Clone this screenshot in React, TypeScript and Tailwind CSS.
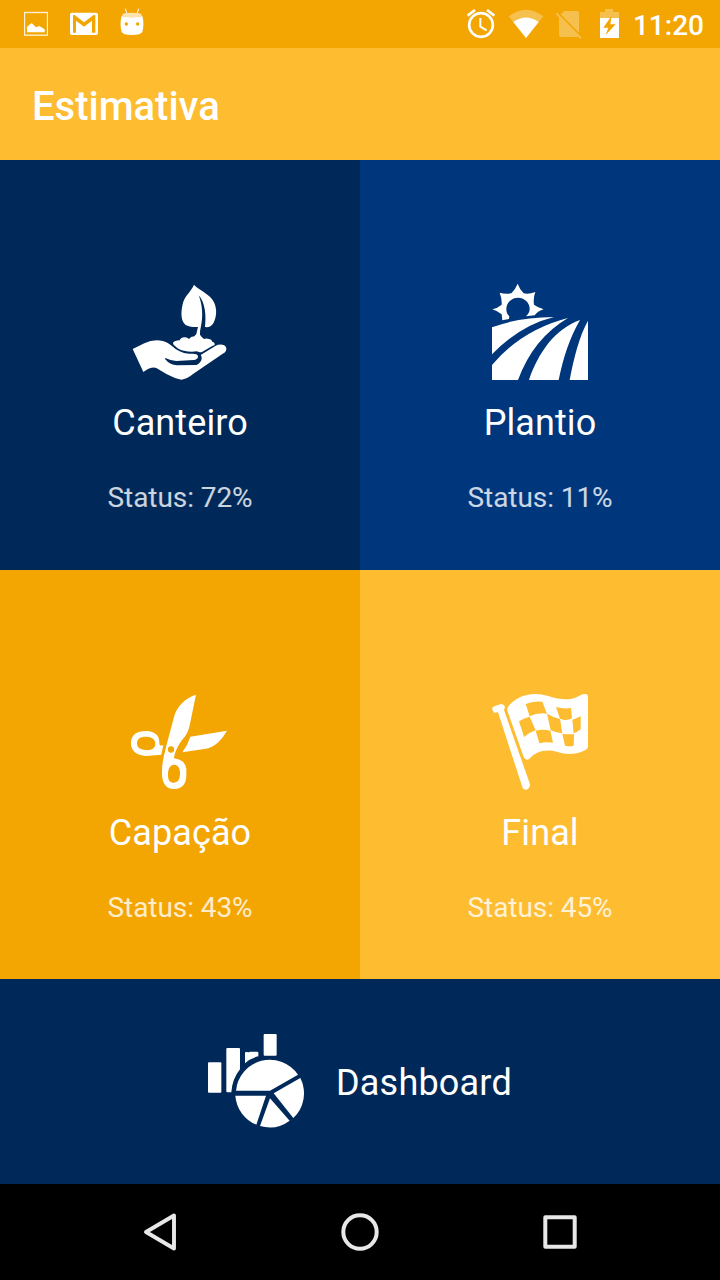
import type { ReactNode } from "react";

function PlantIcon() {
  return (
    <svg viewBox="0 0 360 345" className="h-[115px] w-[120px] fill-white">
      <path d="M222 29C234 43 259 52 274 70C292 92 292 121 281 143C276 152 267 158 255 156C259 122 256 84 236 61C248 91 249 125 243 153Q239 169 240 179Q245 187 252 192Q260 189 267 192Q275 193 277 200Q285 202 284 209Q283 212 278 212L246 231Q238 233 231 229Q210 232 192 227Q177 226 166 214Q157 208 160 202Q164 197 179 196Q183 187 193 187Q201 186 207 192Q212 185 223 184Q231 179 231 168L234 156Q208 157 196 149C179 134 184 100 190 80C197 61 213 49 222 29Z" />
      <path d="M38 222L73 205Q100 192 128 198C148 202 160 220 179 229C193 237 211 236 224 237Q235 238 234 247Q232 254 221 255L169 258Q151 256 136 249Q133 252 138 255Q150 270 171 271L229 270Q242 264 245 252Q246 244 242 240L286 213Q298 206 311 210Q322 216 318 227Q316 232 307 237L218 298Q201 313 184 314Q167 312 152 303C134 295 120 285 109 279Q94 274 70 291L60 269Z" />
    </svg>
  );
}

function FieldIcon() {
  return (
    <svg viewBox="0 0 360 345" className="h-[115px] w-[120px] fill-white">
      <path d="M67 136L65 118Q53 108 37 103Q53 99 65 89Q66 70 59 53Q76 58 94 55Q106 43 113 26Q119 43 131 55Q148 58 166 51Q159 69 162 89Q174 98 191 103Q174 108 164 121L138 124Q149 113 149 103A35 35 0 0 0 79 103Q79 116 88 124L87 132Z" />
      <path d="M36 157Q115 127 222 126Q120 151 36 238Z" />
      <path d="M36 270Q126 164 264 129Q160 190 114 315H36Z" />
      <path d="M147 315C175 232 226 161 300 135C268 191 250 248 236 315Z" />
      <path d="M269 315C281 251 297 185 324 137V315Z" />
    </svg>
  );
}

function ScissorsIcon() {
  return (
    <svg viewBox="0 0 360 345" className="h-[115px] w-[120px] fill-white">
      <path
        fillRule="evenodd"
        d="M228 29L208 126Q202 148 188 163C176 178 163 202 162 220Q195 224 199 251V270Q199 311 163 312Q127 312 126 266C125 232 134 205 139 182L163 92C172 62 198 38 228 29ZM153 184A9.500 9.500 0 1 0 153 203A9.500 9.500 0 1 0 153 184ZM163 239C147 238 143 258 144 273C145 288 151 294 162 293C178 292 180 277 180 264C180 249 174 240 163 239Z"
      />
      <path
        fillRule="evenodd"
        d="M33 174C33 147 54 137 80 138C104 139 119 151 118 173C118 181 122 184 130 180L124 209L77 213C50 211 33 199 33 174ZM80 155C63 154 52 160 51 173C50 187 60 193 77 195C96 196 106 189 106 176C106 162 95 156 80 155Z"
      />
      <path d="M211 155L321 137C306 162 287 187 253 192L187 202Q203 181 211 155Z" />
    </svg>
  );
}

function FlagIcon() {
  return (
    <svg viewBox="0 0 360 345" className="h-[115px] w-[120px]">
      <path
        fill="white"
        d="M37 74Q35 66 45 63L63 57Q72 57 75 65L72 75L149 295Q152 306 144 312Q134 317 128 309L54 82L42 83Z"
      />
      <path
        fill="white"
        d="M82 77Q80 67 91 57C119 28 162 20 205 33C245 46 275 48 304 29Q323 23 324 34V184Q324 193 312 197C284 210 258 209 232 201C194 190 166 202 148 221Q138 229 131 216Z"
      />
      <g className="fill-[#febc30]">
        <path d="M137 57Q160 47 187 50L201 86Q173 82 149 94Z" />
        <path d="M228 66Q251 73 273 69L276 100Q260 109 240 101Z" />
        <path d="M117 109Q132 99 149 95L167 136Q146 143 132 156Z" />
        <path d="M201 86Q218 96 240 102L247 145Q230 143 212 136Z" />
        <path d="M277 104Q290 101 302 93V133Q291 142 281 145Z" />
        <path d="M167 137Q188 131 211 137L219 173Q197 170 178 175Z" />
        <path d="M247 146Q265 149 282 147L281 182Q268 185 255 182Z" />
      </g>
    </svg>
  );
}

function ChartIcon() {
  return (
    <svg viewBox="36 36 300 294" className="h-[98px] w-[100px] fill-white">
      <rect x="39" y="127" width="40" height="91" rx="3" />
      <path d="M94 87Q94 84 97 84H132Q135 84 135 87V148Q112 176 109 217H97Q94 217 94 214Z" />
      <path d="M150 99Q150 96 153 96L162 97L165 95H187Q190 95 190 98V109Q167 114 150 130Z" />
      <rect x="206" y="42" width="39" height="65" rx="3" />
      <path d="M123 212A102 102 0 0 1 309 164L225 212Z" />
      <path d="M316 174A102 102 0 0 1 295 294L236 220Z" />
      <path d="M121 227H213L184 314A102 102 0 0 1 121 227Z" />
      <path d="M225 235L284 302A102 102 0 0 1 195 318Z" />
    </svg>
  );
}

function StatusBar() {
  return (
    <header className="flex h-12 items-start justify-between bg-[#f3a502] pr-4 pl-6 text-white">
      <div className="flex">
        <svg viewBox="72 0 72 144" className="h-12 w-6">
          <rect x="73.500" y="37.500" width="69" height="68" fill="none" stroke="white" strokeOpacity=".85" strokeWidth="4" />
          <path fill="white" d="M81 97V80L95 69L108 82L118 78L134 88V97Z" />
        </svg>
        <svg viewBox="210 0 84 144" className="ml-[22px] h-12 w-7">
          <path
            fill="white"
            fillRule="evenodd"
            d="M216 38H288Q294 38 294 44V99Q294 105 288 105H216Q210 105 210 99V44Q210 38 216 38ZM219 45V98H228V62L252 80L276 62V98H286V45H281L252 67L224 45Z"
          />
        </svg>
        <svg viewBox="360 0 72 144" className="ml-[22px] h-12 w-6">
          <path stroke="white" strokeWidth="3" fill="none" d="M376 26L381 42M416 26L411 42" />
          <path
            fill="white"
            fillRule="evenodd"
            d="M365 48Q396 56 427 48C432 64 431 83 427 96Q422 105 396 105Q369 105 365 96C361 83 360 64 365 48ZM379 67A5 5 0 1 0 379 77A5 5 0 1 0 379 67ZM413 67A5 5 0 1 0 413 77A5 5 0 1 0 413 67Z"
          />
          <ellipse cx="396" cy="45" rx="30" ry="7" fill="#fce3b0" />
        </svg>
      </div>
      <div className="flex">
        <svg viewBox="48 0 90 144" className="h-12 w-[30px]" fill="none" stroke="white">
          <circle cx="93" cy="75" r="35.500" strokeWidth="8" />
          <path strokeWidth="8" d="M53 47L75 30M111 30L133 47" />
          <path strokeWidth="6" d="M91 54V80L110 91" />
        </svg>
        <svg viewBox="174 0 108 144" className="ml-3 h-12 w-9">
          <path fill="white" fillOpacity=".3" d="M176 49Q228 10 280 49L228 114Z" />
          <path fill="white" d="M190 66Q228 39 266 66L228 114Z" />
        </svg>
        <svg viewBox="315 0 84 144" className="ml-[11px] h-12 w-7">
          <g opacity=".3">
            <path fill="white" d="M343 33H381Q387 33 387 39V98L332 43ZM327 48L387 108Q385 111 381 111H334Q327 111 327 104Z" />
            <path stroke="white" strokeWidth="6" d="M319 40L393 115" />
          </g>
        </svg>
        <svg viewBox="450 0 57 144" className="ml-[17px] h-12 w-[19px]">
          <path fill="white" fillOpacity=".3" d="M450 54V36H465V27H489V36H507V54Z" />
          <path fill="white" d="M450 54H507V114H450Z" />
          <path className="fill-[#f3a502]" d="M485 47L460 83H475L467 105L497 73H481Z" />
        </svg>
        <span className="ml-[13px] w-[72px] text-right text-[28px] leading-[52px] font-medium">11:20</span>
      </div>
    </header>
  );
}

function Tile({ icon, label, status, className }: { icon: ReactNode; label: string; status: string; className: string }) {
  return (
    <section className={`flex flex-col items-center pt-[115px] text-white ${className}`}>
      {icon}
      <h2 className="mt-3 text-[36px] leading-[42px] tracking-[0.1px]">{label}</h2>
      <p className="mt-9 text-[28px] leading-9 tracking-[-0.07px] text-white/80">Status: {status}</p>
    </section>
  );
}

export default function App() {
  return (
    <div className="flex h-[1280px] w-[720px] flex-col overflow-hidden font-['Roboto',sans-serif]">
      <StatusBar />
      <div className="flex h-28 items-center bg-[#febc30] pt-1.5 pl-8">
        <h1 className="text-[40px] leading-[48px] font-medium text-white">Estimativa</h1>
      </div>
      <main className="grid grid-cols-2 grid-rows-[410px_409px]">
        <Tile icon={<PlantIcon />} label="Canteiro" status="72%" className="bg-[#00295a]" />
        <Tile icon={<FieldIcon />} label="Plantio" status="11%" className="bg-[#00367b]" />
        <Tile icon={<ScissorsIcon />} label="Capação" status="43%" className="bg-[#f3a502]" />
        <Tile icon={<FlagIcon />} label="Final" status="45%" className="bg-[#febc30]" />
      </main>
      <section className="flex h-[205px] items-start bg-[#00295a] pt-[53px] pl-[207px] text-white">
        <ChartIcon />
        <span className="mt-[30px] ml-[29px] text-[36px] leading-[42px] tracking-[0.2px]">Dashboard</span>
      </section>
      <nav className="flex h-24 items-center justify-center gap-[152px] bg-black">
        <svg viewBox="0 0 48 48" className="size-12" fill="none" stroke="#e8e8e8" strokeWidth="3.900" strokeLinejoin="round">
          <path d="M38 7.500V40.500L10 24Z" />
        </svg>
        <svg viewBox="0 0 48 48" className="size-12" fill="none" stroke="#e8e8e8" strokeWidth="4">
          <circle cx="24" cy="24" r="16.700" />
        </svg>
        <svg viewBox="0 0 48 48" className="size-12" fill="none" stroke="#e8e8e8" strokeWidth="4" strokeLinejoin="round">
          <rect x="9.300" y="9.300" width="29.400" height="29.400" />
        </svg>
      </nav>
    </div>
  );
}
